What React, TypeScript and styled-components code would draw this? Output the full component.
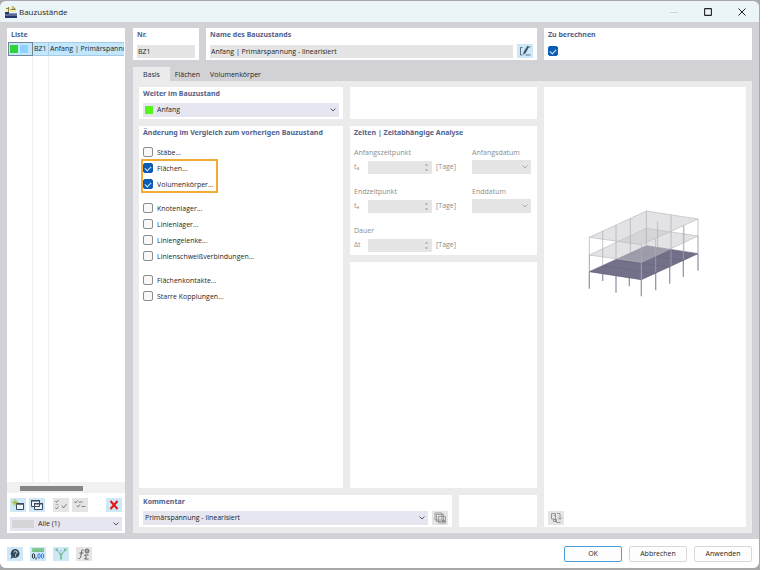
import React from "react";
import styled, { createGlobalStyle, css } from "styled-components";

const Global = createGlobalStyle`
  * { box-sizing: border-box; }
  body { margin: 0; background: #a9a9ad; font-family: "Open Sans", "Noto Sans", sans-serif; font-size: 7px; line-height: 10px; color: #1f1f1f; }
  button, input, select { font: inherit; color: inherit; margin: 0; }
`;

const Window = styled.div`
  min-height: calc(100vh - 3px);
  margin: 1px 1px 2px 0;
  display: flex;
  flex-direction: column;
  background: #d2d2d6;
  border-radius: 6px;
  overflow: hidden;
`;

const TitleBar = styled.header`
  height: 21px;
  display: flex;
  align-items: center;
  gap: 2px;
  padding: 0 0 0 5px;
  background: #ebf5f8;
`;

const Title = styled.h1`
  flex: 1;
  margin: 0;
  font-size: 8px;
  line-height: 12px;
  font-weight: 400;
`;

const WindowControls = styled.div`
  display: flex;
`;

const WindowButton = styled.button<{ $faded?: boolean }>`
  width: 34px;
  height: 20px;
  padding: 0;
  display: grid;
  place-items: center;
  border: 0;
  background: none;
  opacity: ${(p) => (p.$faded ? 0.15 : 1)};
`;

const Body = styled.main`
  flex: 1;
  display: flex;
  gap: 8px;
  padding: 6px 7px;
`;

const Sidebar = styled.aside`
  width: 118px;
  display: flex;
  flex-direction: column;
  background: #fff;
`;

const Heading = styled.h2`
  display: block;
  margin: 0;
  font-family: "Noto Sans", "Open Sans", sans-serif;
  font-size: 7px;
  line-height: 14px;
  font-weight: 700;
  color: #51618c;
  white-space: nowrap;
`;

const SidebarHeading = styled(Heading)`
  padding-left: 4px;
`;

const ListArea = styled.div`
  flex: 1;
  display: flex;
  padding: 0 1px;
`;

const ListTable = styled.table`
  width: 100%;
  table-layout: fixed;
  border-collapse: separate;
  border-spacing: 0;
  td { padding: 0 0 0 1px; border-right: 1px solid #f0f0f2; white-space: nowrap; overflow: hidden; }
  td:last-child { border-right: 0; }
`;

const ListRow = styled.tr`
  height: 14px;
  td { background: #c2e6fb; border-top: 1px solid #a4cbe2; border-bottom: 1px solid #a4cbe2; border-right-color: #a9cfe4; }
  td:first-child { border: 1px solid #6f8796; }
`;

const Swatch = styled.span<{ $color: string; $wide?: boolean }>`
  display: inline-block;
  flex: none;
  vertical-align: middle;
  width: ${(p) => (p.$wide ? 22 : 8)}px;
  height: 8px;
  margin-right: 2px;
  background: ${(p) => p.$color};
`;

const ScrollTrack = styled.div`
  height: 11px;
  padding: 4px 13px;
  background: #f1f1f1;
`;

const ScrollThumb = styled.div`
  width: 68%;
  height: 5px;
  background: #858585;
`;

const ListTools = styled.div`
  display: flex;
  gap: 3px;
  padding: 5px 3px;
`;

const ToolGap = styled.span<{ $grow?: boolean }>`
  width: 2px;
  flex: ${(p) => (p.$grow ? "1" : "none")};
`;

const IconButton = styled.button<{ $active?: boolean }>`
  flex: none;
  width: 16px;
  height: 14px;
  padding: 0;
  display: grid;
  place-items: center;
  border: 0;
  background: ${(p) => (p.$active ? "#cfe8f8" : "#e5e5e5")};
  svg { display: block; }
`;

const FilterRow = styled.div`
  padding: 0 3px 2px;
`;

const SelectBox = styled.div<{ $muted?: boolean }>`
  position: relative;
  flex: 1;
  min-width: 0;
  height: 14px;
  display: flex;
  align-items: center;
  padding-left: 2px;
  background: ${(p) => (p.$muted ? "#e5e5e5" : "#e6e6f1")};
`;

const Select = styled.select<{ $indent?: boolean }>`
  flex: 1;
  min-width: 0;
  height: 14px;
  padding: 0 12px 0 ${(p) => (p.$indent ? 2 : 0)}px;
  appearance: none;
  border: 0;
  background: none;
  outline: 0;
`;

const ChevronSvg = styled.svg<{ $muted?: boolean }>`
  position: absolute;
  right: 2px;
  top: 4px;
  pointer-events: none;
  stroke: ${(p) => (p.$muted ? "#aaa" : "#55556a")};
  fill: none;
`;

const Content = styled.section`
  flex: 1;
  min-width: 0;
  display: flex;
  flex-direction: column;
`;

const HeaderRow = styled.div`
  display: grid;
  grid-template-columns: 66fr 331fr 208fr;
  gap: 7px;
  margin-bottom: 7px;
`;

const Panel = styled.section`
  min-width: 0;
  padding: 0 4px;
  background: #fff;
`;

const Line = styled.div`
  display: flex;
  align-items: center;
  gap: 4px;
  height: 18px;
`;

const TextField = styled.input`
  flex: 1;
  min-width: 0;
  height: 13px;
  padding: 0 1px;
  border: 0;
  background: #e5e5e5;
`;

const Tabs = styled.nav`
  display: flex;
`;

const Tab = styled.button<{ $selected?: boolean }>`
  height: 14px;
  padding: 2px 5px 0;
  border: 0;
  background: none;
  ${(p) => p.$selected && css`
    padding: 2px 10px 0;
    background: #ebebeb;
  `}
`;

const TabPage = styled.div`
  flex: 1;
  display: grid;
  grid-template-columns: 398fr 202fr;
  gap: 7px;
  padding: 6px;
  background: #ebebeb;
`;

const MainArea = styled.div`
  min-width: 0;
  display: grid;
  grid-template-columns: 204fr 187fr;
  grid-template-rows: 32px 1fr 32px;
  gap: 7px;
`;

const Stack = styled.div`
  min-width: 0;
  display: flex;
  flex-direction: column;
  gap: 7px;
  & > :last-child { flex: 1; }
`;

const CommentRow = styled.div`
  grid-column: 1 / -1;
  display: grid;
  grid-template-columns: 313fr 78fr;
  gap: 7px;
`;

const CheckGroup = styled.div<{ $highlight?: boolean }>`
  position: relative;
  width: max-content;
  ${(p) => p.$highlight && css`
    &::after {
      content: "";
      position: absolute;
      inset: -1px -4px -1px -2px;
      border: 2px solid #efad36;
      pointer-events: none;
    }
  `}
`;

const Checks = styled.div`
  padding-top: 4px;
`;

const Spacer = styled.div`
  height: 8px;
`;

const CheckLabel = styled.label`
  display: flex;
  align-items: center;
  gap: 4px;
  height: 16px;
`;

const CheckText = styled.span`
  padding-top: 2px;
`;

const Checkbox = styled.input`
  appearance: none;
  flex: none;
  width: 10px;
  height: 10px;
  display: grid;
  place-content: center;
  border: 1px solid #8b8b8b;
  border-radius: 2px;
  background: #f8f8f8;
  &:checked { background: #0b5cb5; border-color: #0b5cb5; }
  &:checked::after {
    content: "";
    width: 5px;
    height: 3px;
    margin-bottom: 1px;
    border: solid #d5e6f7;
    border-width: 0 0 1px 1px;
    transform: rotate(-45deg);
  }
`;

const TimeGrid = styled.div`
  display: grid;
  grid-template-columns: 118fr 59fr;
  row-gap: 11px;
  padding: 6px 2px 3px 0;
  color: #8c8c8c;
`;

const FieldLabel = styled.label`
  display: block;
  line-height: 14px;
`;

const Symbol = styled.span`
  width: 14px;
  sub { font-size: 5px; line-height: 0; vertical-align: -1px; }
`;

const TimeLine = styled.div`
  display: flex;
  align-items: center;
  height: 14px;
`;

const SpinBox = styled.span`
  position: relative;
  display: flex;
  width: 64px;
  margin-right: 4px;
  svg { position: absolute; right: 3px; top: 2px; }
`;

const Preview = styled(Panel)`
  display: flex;
  flex-direction: column;
  align-items: flex-start;
  padding-bottom: 2px;
`;

const PreviewDrawing = styled.div`
  flex: 1;
  align-self: center;
  padding-top: 108px;
`;

const Footer = styled.footer`
  display: flex;
  align-items: center;
  gap: 7px;
  padding: 4px 7px;
  min-height: 29px;
  background: #fff;
`;

const FooterSpace = styled.span`
  flex: 1;
`;

const DialogButton = styled.button<{ $primary?: boolean }>`
  width: 58px;
  height: 16px;
  padding: 0;
  border: 1px solid ${(p) => (p.$primary ? "#4a9fd8" : "#d8d8d8")};
  border-radius: 2px;
  background: #fdfdfd;
`;

const Chevron = ({ muted }: { muted?: boolean }) => (
  <ChevronSvg $muted={muted} width="8" height="6" viewBox="0 0 8 6">
    <path d="M1.500 1.500 4 4l2.500-2.500" />
  </ChevronSvg>
);

const AppIcon = () => (
  <svg width="12" height="12" viewBox="0 0 12 12">
    <path d="M1 1h10v5H1z" fill="#f4eda0" />
    <path d="M3.500 1v6M8 0v4M10 2l-1 2M1 2.500h3M5.500 3.500h5" stroke="#686c58" strokeWidth=".8" />
    <path d="M0 6h4v1.500h8V12H0z" fill="#24366f" />
    <path d="M0 9h12" stroke="#aeb9d6" strokeWidth=".8" />
  </svg>
);

const NewIcon = () => (
  <svg width="14" height="12" viewBox="0 0 14 12" fill="none">
    <path d="M5.500 4.500h7v6h-7z" fill="#eef6fb" stroke="#3c4a60" />
    <path d="M5 5h8" stroke="#3c4a60" strokeWidth="1.500" />
    <path d="M4 0v7M.5 3.500h7M1.800 1.300l4.400 4.400M6.200 1.300 1.800 5.700" stroke="#a5b92c" strokeWidth=".9" />
  </svg>
);

const CopyIcon = () => (
  <svg width="14" height="12" viewBox="0 0 14 12">
    <path d="M1.500 1.500h8v6h-8zM4.500 4.500h8v6h-8z" fill="#eef6fb" stroke="#3c4a60" />
    <path d="M1 1.700h9M4 4.700h9" stroke="#3c4a60" strokeWidth="1.500" />
  </svg>
);

const CheckAllIcon = () => (
  <svg width="14" height="12" viewBox="0 0 14 12" fill="none" stroke="#777" strokeWidth=".9">
    <path d="m1.500 2 1 1.500L4.500 1M1.500 8.500l1 1.500 2-2.500M8 6.500 9.500 9l3-4" />
    <path d="M1.500 5.500h3" strokeWidth=".5" />
  </svg>
);

const InvertIcon = () => (
  <svg width="14" height="12" viewBox="0 0 14 12" fill="none" stroke="#777" strokeWidth=".9">
    <path d="m1.500 2.500 1 1.500 2-2.500M5.500 3h4M4 6.500l1 1.500 2-2.500M8.500 7.500h4" />
  </svg>
);

const DeleteIcon = () => (
  <svg width="14" height="12" viewBox="0 0 14 12">
    <path d="m3.500 2 7 8M10.500 2l-7 8" stroke="#e31515" strokeWidth="2" />
  </svg>
);

const EditIcon = () => (
  <svg width="14" height="12" viewBox="0 0 14 12" fill="none" stroke="#3c5369" strokeWidth=".8">
    <path d="M4.500 2.500H2.500v7.500h2M7.500 10h5" />
    <path d="m5.500 9.500.3-2.500L9.500 1l1.300.8L7.500 8z" fill="#3c5369" strokeWidth=".4" />
    <path d="M10.500 2h2" />
  </svg>
);

const PagesIcon = () => (
  <svg width="14" height="12" viewBox="0 0 14 12" fill="#e2e2e2" stroke="#8f8f8f" strokeWidth=".8">
    <path d="M2 1h7v7H2zM3.500 2.500h7v7h-7zM5.500 4.500h7V11h-7z" />
    <path d="M9.500 8h2v2h-2z" fill="#888" />
  </svg>
);

const SwapIcon = () => (
  <svg width="14" height="12" viewBox="0 0 14 12" fill="none" stroke="#8d8d8d" strokeWidth=".9">
    <path d="M2.500 1.500h4v8M2.500 1.500V7h3M4.500 3.500h2M8 1.500h3v5.500M9 5.500 11 7.500l2-2M7.500 7v3.500h4" />
    <path d="M4.500 7.500h2v2h-2z" />
  </svg>
);

const HelpIcon = () => (
  <svg width="14" height="12" viewBox="0 0 14 12">
    <path d="M7.500 1a4.500 4.500 0 1 1-2.500 8.500L2.500 11l1-3A4.500 4.500 0 0 1 7.500 1z" fill="#33465a" />
    <path d="M6 4.500c0-2 3-2 3 0 0 1-1.500 1-1.500 2.200M7.500 7.500v1" stroke="#fff" fill="none" strokeWidth=".9" />
  </svg>
);

const UnitsIcon = () => (
  <svg width="14" height="12" viewBox="0 0 14 12">
    <path d="M1 0h12v4H1z" fill="#86c995" />
    <path d="M3 2v2M5 2v2M7 2v2M9 2v2M11 2v2" stroke="#57a86a" strokeWidth=".6" />
    <ellipse cx="2.500" cy="8" rx="1.200" ry="2.300" fill="none" stroke="#1b2635" />
    <path d="M5 9.500v2" stroke="#1b2635" />
    <ellipse cx="8" cy="8" rx="1.200" ry="2.300" fill="none" stroke="#2f76ee" />
    <ellipse cx="11.500" cy="8" rx="1.200" ry="2.300" fill="none" stroke="#2f76ee" />
  </svg>
);

const AxesIcon = () => (
  <svg width="14" height="12" viewBox="0 0 14 12" fill="none">
    <path d="m3 2.500 4 4 4-4M7 6v5" stroke="#65a98b" />
    <path d="M1.500.5h2.500V3H1.500zM10 .5h2.500V3H10zM5.500 5h3v2.500h-3zM6 9h2v2.500H6z" fill="#78c18c" />
    <path d="m5.500 2 1.500 1.500L8.500 2" stroke="#77a9d8" strokeWidth=".7" />
  </svg>
);

const FormulaIcon = () => (
  <svg width="14" height="12" viewBox="0 0 14 12" fill="none" stroke="#555" strokeWidth=".9">
    <path d="M6.500 2C4.800 1 4.600 3 4.200 6S3.500 11 1.500 10.500M2.500 5h4M11.500 7H7.500l2 2-2 2h4" />
    <circle cx="10" cy="3" r="2" />
    <path d="M8 3h4M10 1v4" strokeWidth=".5" />
  </svg>
);

const Building = () => (
  <svg width="150" height="115" viewBox="0 0 450 345" role="img" aria-label="Modell">
    <g stroke="#9a98ae" strokeWidth="4">
      <path d="M58 230v51M138 240v53M178 234v40M98 212v46M214 250v54M257 232v54M299 212v54M340 194v52M384 176v51" />
    </g>
    <path d="M58 230 229 152 384 176 214 254z" fill="#737089" stroke="#605e78" strokeWidth="2" />
    <g stroke="#5e5b76" strokeWidth="2" opacity=".45">
      <path d="M98 212l155 24M138 194l160 22M181 174l160 22" />
    </g>
    <g fill="#c8c8cb" fillOpacity=".5" stroke="#b9b9be" strokeWidth="2">
      <path d="M58 180 229 100 384 123 214 202z" />
      <path d="M58 127 229 48 384 72 214 149z" />
    </g>
    <g stroke="#a4a3b6" strokeWidth="3">
      <path d="M58 180v50M214 202v52M384 123v53" />
    </g>
    <path d="M58 127v54M98 108v105M138 90v104M181 70v104M229 48v104M263 80v75M303 60v154M342 94v76M384 72v52M214 149v52M257 130v102M340 90v104" stroke="#aaa9b3" strokeWidth="2" fill="none" />
  </svg>
);

const Check = ({ label, on }: { label: string; on?: boolean }) => (
  <CheckLabel>
    <Checkbox type="checkbox" defaultChecked={on} />
    <CheckText>{label}</CheckText>
  </CheckLabel>
);

const TimeField = ({ id, label, symbol }: { id: string; label: string; symbol: React.ReactNode }) => (
  <div>
    <FieldLabel htmlFor={id}>{label}</FieldLabel>
    <TimeLine>
      <Symbol>{symbol}</Symbol>
      <SpinBox>
        <TextField id={id} disabled />
        <svg width="5" height="9" viewBox="0 0 5 9" fill="#8b8b8b">
          <path d="m1 2.500 1.500-1.500L4 2.500zM1 6.500 2.500 8 4 6.500z" />
        </svg>
      </SpinBox>
      [Tage]
    </TimeLine>
  </div>
);

const DateField = ({ id, label }: { id: string; label: string }) => (
  <div>
    <FieldLabel htmlFor={id}>{label}</FieldLabel>
    <SelectBox $muted>
      <Select id={id} disabled />
      <Chevron muted />
    </SelectBox>
  </div>
);

export default function App() {
  return (
    <>
      <Global />
      <Window>
        <TitleBar>
          <AppIcon />
          <Title>Bauzustände</Title>
          <WindowControls>
            <WindowButton $faded aria-label="Minimieren">
              <svg width="8" height="8" viewBox="0 0 8 8"><path d="M0 4.500h8" stroke="#222" /></svg>
            </WindowButton>
            <WindowButton aria-label="Maximieren">
              <svg width="8" height="8" viewBox="0 0 8 8"><rect x=".6" y=".6" width="6.800" height="6.800" rx=".5" fill="none" stroke="#222" strokeWidth="1.100" /></svg>
            </WindowButton>
            <WindowButton aria-label="Schließen">
              <svg width="8" height="8" viewBox="0 0 8 8"><path d="m.5.5 7 7M7.500.5l-7 7" stroke="#222" /></svg>
            </WindowButton>
          </WindowControls>
        </TitleBar>

        <Body>
          <Sidebar>
            <SidebarHeading>Liste</SidebarHeading>
            <ListArea>
              <ListTable>
                <colgroup><col width="25" /><col width="16" /><col /></colgroup>
                <tbody>
                  <ListRow>
                    <td><Swatch $color="#2fd33c" /><Swatch $color="#8ed3ff" /></td>
                    <td>BZ1</td>
                    <td>Anfang | Primärspannung - linearisiert</td>
                  </ListRow>
                  <tr><td /><td /><td /></tr>
                </tbody>
              </ListTable>
            </ListArea>
            <ScrollTrack><ScrollThumb /></ScrollTrack>
            <ListTools>
              <IconButton $active aria-label="Neu"><NewIcon /></IconButton>
              <IconButton $active aria-label="Kopieren"><CopyIcon /></IconButton>
              <ToolGap />
              <IconButton aria-label="Alle auswählen"><CheckAllIcon /></IconButton>
              <IconButton aria-label="Auswahl umkehren"><InvertIcon /></IconButton>
              <ToolGap $grow />
              <IconButton $active aria-label="Löschen"><DeleteIcon /></IconButton>
            </ListTools>
            <FilterRow>
              <SelectBox>
                <Swatch $color="#d5d5d9" $wide />
                <Select $indent aria-label="Filter"><option>Alle (1)</option></Select>
                <Chevron />
              </SelectBox>
            </FilterRow>
          </Sidebar>

          <Content>
            <HeaderRow>
              <Panel>
                <Heading as="label" htmlFor="nr">Nr.</Heading>
                <Line><TextField id="nr" defaultValue="BZ1" readOnly /></Line>
              </Panel>
              <Panel>
                <Heading as="label" htmlFor="name">Name des Bauzustands</Heading>
                <Line>
                  <TextField id="name" defaultValue="Anfang | Primärspannung - linearisiert" readOnly />
                  <IconButton $active aria-label="Bearbeiten"><EditIcon /></IconButton>
                </Line>
              </Panel>
              <Panel>
                <Heading as="label" htmlFor="calc">Zu berechnen</Heading>
                <Line><Checkbox id="calc" type="checkbox" defaultChecked /></Line>
              </Panel>
            </HeaderRow>

            <Tabs>
              <Tab $selected>Basis</Tab>
              <Tab>Flächen</Tab>
              <Tab>Volumenkörper</Tab>
            </Tabs>

            <TabPage>
              <MainArea>
                <Panel>
                  <Heading as="label" htmlFor="next">Weiter im Bauzustand</Heading>
                  <Line>
                    <SelectBox>
                      <Swatch $color="#55f51b" />
                      <Select $indent id="next"><option>Anfang</option></Select>
                      <Chevron />
                    </SelectBox>
                  </Line>
                </Panel>
                <Panel />

                <Panel>
                  <Heading>Änderung im Vergleich zum vorherigen Bauzustand</Heading>
                  <Checks>
                    <Check label="Stäbe..." />
                    <CheckGroup $highlight>
                      <Check label="Flächen..." on />
                      <Check label="Volumenkörper..." on />
                    </CheckGroup>
                    <Spacer />
                    <CheckGroup>
                      <Check label="Knotenlager..." />
                      <Check label="Linienlager..." />
                      <Check label="Liniengelenke..." />
                      <Check label="Linienschweißverbindungen..." />
                    </CheckGroup>
                    <Spacer />
                    <CheckGroup>
                      <Check label="Flächenkontakte..." />
                      <Check label="Starre Kopplungen..." />
                    </CheckGroup>
                  </Checks>
                </Panel>
                <Stack>
                  <Panel>
                    <Heading>Zeiten | Zeitabhängige Analyse</Heading>
                    <TimeGrid>
                      <TimeField id="start" label="Anfangszeitpunkt" symbol={<>t<sub>a</sub></>} />
                      <DateField id="startDate" label="Anfangsdatum" />
                      <TimeField id="end" label="Endzeitpunkt" symbol={<>t<sub>e</sub></>} />
                      <DateField id="endDate" label="Enddatum" />
                      <TimeField id="duration" label="Dauer" symbol="Δt" />
                    </TimeGrid>
                  </Panel>
                  <Panel />
                </Stack>

                <CommentRow>
                  <Panel>
                    <Heading as="label" htmlFor="comment">Kommentar</Heading>
                    <Line>
                      <SelectBox>
                        <Select id="comment"><option>Primärspannung - linearisiert</option></Select>
                        <Chevron />
                      </SelectBox>
                      <IconButton aria-label="Kommentare"><PagesIcon /></IconButton>
                    </Line>
                  </Panel>
                  <Panel />
                </CommentRow>
              </MainArea>

              <Preview>
                <PreviewDrawing><Building /></PreviewDrawing>
                <IconButton aria-label="Ansicht wechseln"><SwapIcon /></IconButton>
              </Preview>
            </TabPage>
          </Content>
        </Body>

        <Footer>
          <IconButton $active aria-label="Hilfe"><HelpIcon /></IconButton>
          <IconButton $active aria-label="Einheiten"><UnitsIcon /></IconButton>
          <IconButton $active aria-label="Struktur"><AxesIcon /></IconButton>
          <IconButton aria-label="Formel"><FormulaIcon /></IconButton>
          <FooterSpace />
          <DialogButton $primary>OK</DialogButton>
          <DialogButton>Abbrechen</DialogButton>
          <DialogButton>Anwenden</DialogButton>
        </Footer>
      </Window>
    </>
  );
}
